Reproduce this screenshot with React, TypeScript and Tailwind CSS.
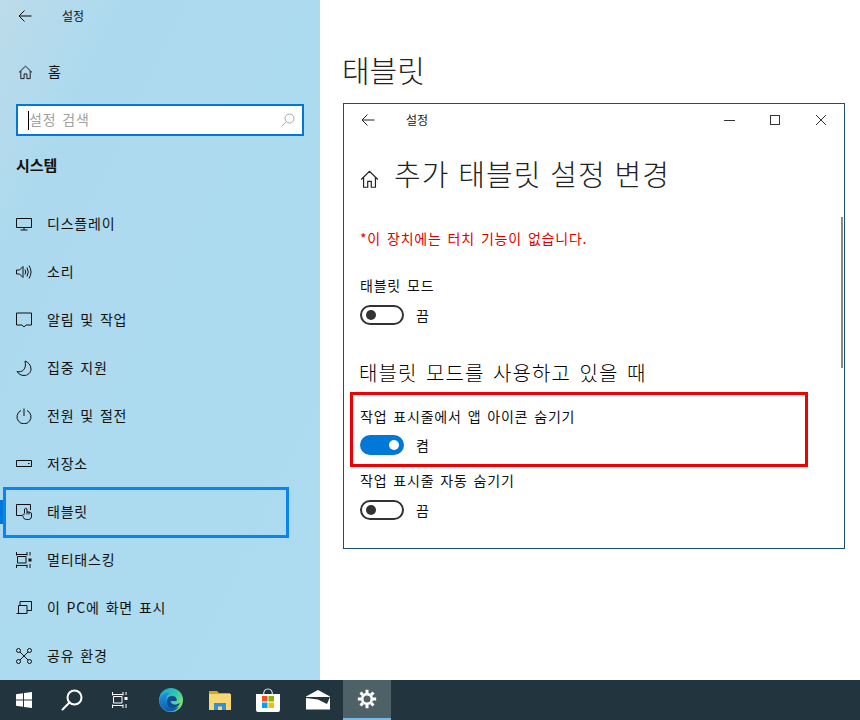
import React from "react";

const S = ({ children, w = 16, h = 16, box, className = "" }: any) => (
  <svg width={w} height={h} viewBox={box || `0 0 ${w} ${h}`} fill="none" stroke="currentColor" strokeWidth="1" className={"shrink-0 " + className}>
    {children}
  </svg>
);

const HomeIcon = ({ size = 16 }: { size?: number }) => (
  <S w={size} h={size} box="0 0 16 16">
    <path d="M1 8 L8 1.2 L15 8 M3 6.3 V14.5 H6.5 V9.5 H9.5 V14.5 H13 V6.3" />
  </S>
);

const Back = () => (
  <S w={14} h={14}>
    <path d="M1 7 H13.5 M6.5 1.5 L1 7 L6.5 12.5" />
  </S>
);

const nav: [string, React.ReactNode][] = [
  ["디스플레이", <S><path d="M.5 2.5 H15.5 V11.5 H.5 Z M8 11.5 V14 M4.5 14 H11.5" /></S>],
  ["소리", <S><path d="M.5 6 H3.5 L7 2.5 V13.5 L3.5 10 H.5 Z M9 5.5 Q10.5 8 9 10.5 M11 3.5 Q13.5 8 11 12.5 M13 1.5 Q17 8 13 14.5" /></S>],
  ["알림 및 작업", <S><path d="M.5 1 H15.5 V13 H10 L8 15 L6 13 H.5 Z" /></S>],
  ["집중 지원", <S><path d="M9 1 C12 2 15 5 15 9 C15 13 11.5 15.5 8 15.5 C5 15.5 2.5 14 1 11.5 C6 13 11 9 9 1 Z" /></S>],
  ["전원 및 절전", <S><path d="M8 .5 V8 M5 2.5 A7 7 0 1 0 11 2.5" /></S>],
  ["저장소", <S><path d="M.5 4.5 H15.5 V10.5 H.5 Z M12 7.5 H13.5" /></S>],
  ["태블릿", <S><path d="M6 11.5 H.5 V.5 H14.5 V6 M8.5 9.5 V5 Q9.7 3.5 11 5 V8 H13 Q15.5 8 15.5 10 V13 Q15 15.5 12.5 15.5 H10.5 Q8 15.5 7.5 13.5 L6.5 11.5 Q7 9.5 8.5 10.5 M11 8 V10.5 M13 8 V10.5" /></S>],
  ["멀티태스킹", <S><path d="M.5 0 V3.5 M11 0 V3.5 M.5 2.5 H11 M.5 12.5 V16 M11 12.5 V16 M.5 13.5 H11 M1.5 4.5 H10 V11 H1.5 Z M14 0 V3.5 M14 12 V16" /><rect x="12.5" y="6.5" width="3" height="3" fill="currentColor" stroke="none" /></S>],
  ["이 PC에 화면 표시", <S><path d="M4 5 V1.5 H15.5 V10.5 H11 M.5 13.5 H11 V5.5 H2.5 V13.5" /></S>],
  ["공유 환경", <S><circle cx="2.5" cy="2.5" r="2" /><circle cx="13.5" cy="2.5" r="2" /><circle cx="2.5" cy="13.5" r="2" /><circle cx="13.5" cy="13.5" r="2" /><path d="M4 4 L12 12 M12 4 L4 12" /></S>],
];

const Toggle = ({ on }: { on?: boolean }) => (
  <div className="flex items-center h-[20px]">
    {on ? (
      <div className="w-[44px] h-[20px] rounded-full bg-[#0078d7] flex items-center justify-end pr-[5px]">
        <div className="w-[10px] h-[10px] rounded-full bg-white" />
      </div>
    ) : (
      <div className="w-[44px] h-[20px] rounded-full border-2 border-[#333] flex items-center pl-[4px]">
        <div className="w-[10px] h-[10px] rounded-full bg-[#333]" />
      </div>
    )}
    <span className="ml-[12px] text-[14px] leading-[20px] text-[#111]">{on ? "켬" : "끔"}</span>
  </div>
);

const Setting = ({ label, on }: { label: string; on?: boolean }) => (
  <div className={on ? "flex flex-col gap-[9px]" : "flex flex-col gap-[10px]"}>
    <div className="text-[14px] leading-[20px] text-[#111] tracking-[0.8px] [word-spacing:2px]">{label}</div>
    <Toggle on={on} />
  </div>
);

const Edge = () => (
  <svg width="24" height="24" viewBox="0 0 24 24" className="shrink-0">
    <defs>
      <linearGradient id="eg" x1="0" y1="0" x2="1" y2="0.7">
        <stop offset="0" stopColor="#1a9fd8" />
        <stop offset="0.55" stopColor="#2fc4b2" />
        <stop offset="1" stopColor="#84e56a" />
      </linearGradient>
      <linearGradient id="eb" x1="0" y1="0" x2="0.3" y2="1">
        <stop offset="0" stopColor="#1f97e6" />
        <stop offset="1" stopColor="#0f5cae" />
      </linearGradient>
    </defs>
    <circle cx="12" cy="12" r="12" fill="url(#eg)" />
    <path d="M0.2 13 C1 6 7 4 11 5 C7 7 6.5 11 8.5 15 C10.5 19.5 16 20.5 20 19 C16 24.5 8 25 3.5 20 C1.5 18 0.2 16 0.2 13 Z" fill="url(#eb)" />
    <path d="M8 13 C8 9 11 7.5 14 8 C17 8.5 18.5 11 17.5 13 L11.5 13 C11.5 15.5 14 17 17 16.5 L21 15 C19.5 19.5 15 21 11.5 19.5 C9 18.5 8 16 8 13 Z" fill="#0f4c92" />
  </svg>
);

const Folder = () => (
  <svg width="22" height="20" viewBox="0 0 22 20" className="shrink-0">
    <path d="M0 1 H8 L10 3 H21 V6 H0 Z" fill="#d9a520" />
    <rect x="0" y="4" width="22" height="16" fill="#f8d775" />
    <path d="M5 20 V13 H17 V20 H13 V16.5 H9 V20 Z" fill="#2f8fdc" />
  </svg>
);

const Store = () => (
  <svg width="24" height="24" viewBox="0 0 24 24" className="shrink-0">
    <path d="M7.5 7 Q7.5 1 12 1 Q16.5 1 16.5 7" fill="none" stroke="#dfe5e8" strokeWidth="1.2" />
    <path d="M0 6 H24 V22 Q24 24 22 24 H2 Q0 24 0 22 Z" fill="#fff" />
    <rect x="6" y="8" width="5.5" height="5.5" fill="#f25022" />
    <rect x="12.5" y="8" width="5.5" height="5.5" fill="#7fba00" />
    <rect x="6" y="14.5" width="5.5" height="5.5" fill="#00a4ef" />
    <rect x="12.5" y="14.5" width="5.5" height="5.5" fill="#ffb900" />
  </svg>
);

const Mail = () => (
  <svg width="24" height="20" viewBox="0 0 24 20" className="shrink-0">
    <path d="M0 6.5 L12 0 L24 6.5 V19.5 H0 Z" fill="#fff" />
    <path d="M0 7 L24 7 L21 14 L12 9.5 L0 8 Z" fill="#22353f" />
  </svg>
);

const Gear = () => (
  <svg width="20" height="20" viewBox="0 0 24 24" className="shrink-0" fill="none" stroke="#fff" strokeWidth="3.2">
    <circle cx="12" cy="12" r="5.8" />
    <path strokeWidth="3.6" d="M12 1 V5 M12 19 V23 M1 12 H5 M19 12 H23 M4.2 4.2 L7 7 M17 17 L19.8 19.8 M4.2 19.8 L7 17 M17 7 L19.8 4.2" />
  </svg>
);

export default function App() {
  return (
    <div
      className="w-[860px] h-[720px] flex flex-col overflow-hidden bg-white text-black"
      style={{ fontFamily: '"Noto Sans CJK KR", "Noto Sans", sans-serif' }}
    >
      <div className="flex h-[680px]">
        {/* sidebar */}
        <aside className="w-[320px] shrink-0 flex flex-col bg-gradient-to-br from-[#bcdcea] via-[#acd9ee] to-[#acdcf0] via-20%">
          <div className="h-[32px] flex items-center pl-[18px]">
            <Back />
            <span className="ml-[30px] text-[12px] text-[#111]">설정</span>
          </div>
          <div className="h-[16px]" />
          <div className="h-[48px] flex items-center pl-[18px] gap-[15px] text-[#111]">
            <HomeIcon size={15} />
            <span className="text-[14px] pb-[2px]">홈</span>
          </div>
          <div className="h-[8px]" />
          <div className="mx-[16px] h-[32px] border-2 border-[#0078d7] bg-white flex items-center pl-[10px] pr-[7px]">
            <div className="w-[1px] h-[19px] bg-black" />
            <span className="text-[14px] text-[#a0a0a0] flex-1 tracking-[0.8px] [word-spacing:2px] pb-[2px]">설정 검색</span>
            <svg width="14" height="14" viewBox="0 0 14 14" fill="none" stroke="#a8a8a8" strokeWidth="1">
              <circle cx="8.5" cy="5.5" r="4.5" />
              <path d="M5.2 8.8 L.7 13.3" />
            </svg>
          </div>
          <div className="h-[39px] flex items-end pl-[16px]">
            <span className="text-[15px] font-bold leading-[20px] text-[#111]">시스템</span>
          </div>
          <div className="flex-1" />
          <div className="flex flex-col">
            {nav.map(([label, icon]) => {
              const active = label === "태블릿";
              return (
                <div key={label} className="relative h-[48px] flex items-center pl-[16px] gap-[15px] text-[#111]">
                  {active && <div className="absolute left-0 top-[12px] w-[5px] h-[24px] bg-[#0078d7]" />}
                  {active && <div className="absolute left-[3px] top-[-1px] w-[286px] h-[51px] border-[3px] border-[#0a84f0]" />}
                  {icon}
                  <span className="text-[14px] tracking-[0.8px] [word-spacing:2px] pb-[2px]">{label}</span>
                </div>
              );
            })}
          </div>
        </aside>

        {/* main */}
        <main className="flex-1 flex flex-col pl-[23px] pr-[15px]">
          <h1 className="h-[103px] pt-[47px] ml-[-1px] text-[30px] leading-[44px] font-light text-[#222]">태블릿</h1>
          <div className="relative w-[502px] h-[446px] border border-[#1b5172] pl-[16px] pr-[8px] flex flex-col">
            <div className="h-[32px] flex items-center pl-[1px] mr-[-8px] shrink-0 text-[#222]">
              <Back />
              <span className="ml-[31px] text-[12px]">설정</span>
              <div className="flex-1" />
              <div className="w-[46px] flex justify-center">
                <div className="w-[11px] h-[1px] bg-[#333]" />
              </div>
              <div className="w-[46px] flex justify-center">
                <div className="w-[10px] h-[10px] border border-[#333]" />
              </div>
              <div className="w-[46px] flex justify-center">
                <svg width="12" height="12" viewBox="0 0 12 12" stroke="#333" fill="none"><path d="M1 1 L11 11 M11 1 L1 11" /></svg>
              </div>
            </div>
            <div className="h-[54px] flex items-center mt-[16px] shrink-0 text-[#222]">
              <HomeIcon size={19} />
              <span className="ml-[15px] text-[29px] leading-[44px] font-light tracking-[1px] [word-spacing:1.5px] pb-[12px]">추가 태블릿 설정 변경</span>
            </div>
            <div className="absolute right-[1px] top-[113px] w-[2px] h-[151px] bg-[#8a8a8a]" />
            <div className="mt-[22px] text-[14px] leading-[20px] text-[#e00000] tracking-[0.8px] [word-spacing:2px]">*이 장치에는 터치 기능이 없습니다.</div>
            <div className="mt-[27px]">
              <Setting label="태블릿 모드" />
            </div>
            <div className="mt-[33px] ml-[-1px] text-[20px] leading-[30px] text-black font-light tracking-[1.1px] [word-spacing:3px]">태블릿 모드를 사용하고 있을 때</div>
            <div className="relative mt-[18px]">
              <Setting label="작업 표시줄에서 앱 아이콘 숨기기" on />
              <div className="absolute left-[-10px] top-[-14px] w-[458px] h-[75px] border-[3px] border-[#f00000]" />
            </div>
            <div className="mt-[15px]">
              <Setting label="작업 표시줄 자동 숨기기" />
            </div>
          </div>
        </main>
      </div>

      {/* taskbar */}
      <footer className="h-[40px] bg-[#22353f] flex shrink-0 text-white">
        <div className="w-[48px] flex items-center justify-center">
          <svg width="16" height="16" viewBox="0 0 16 16" fill="#fff">
            <path d="M0 2.2 L7 1.2 V7.6 H0 Z M8 1 L16 0 V7.6 H8 Z M0 8.5 H7 V14.8 L0 13.8 Z M8 8.5 H16 V16 L8 15 Z" />
          </svg>
        </div>
        <div className="w-[48px] flex items-center justify-center">
          <svg width="22" height="22" viewBox="0 0 22 22" fill="none" stroke="#fff" strokeWidth="2">
            <circle cx="13.5" cy="8.5" r="7" />
            <path d="M8.5 13.5 L1.5 20.5" strokeLinecap="round" />
          </svg>
        </div>
        <div className="w-[48px] flex items-center justify-center">
          <svg width="16" height="16" viewBox="0 0 16 16" fill="none" stroke="#fff" strokeWidth="1">
            <path d="M.5 0 V3.5 M11 0 V3.5 M.5 2.5 H11 M.5 12.5 V16 M11 12.5 V16 M.5 13.5 H11 M1.5 4.5 H10 V11 H1.5 Z M14 0 V3 M14 12 V16" />
            <rect x="12.5" y="5" width="3" height="3" fill="#fff" stroke="none" />
          </svg>
        </div>
        <div className="w-[48px] ml-[3px] flex items-center justify-center"><Edge /></div>
        <div className="w-[48px] ml-[1px] flex items-center justify-center"><Folder /></div>
        <div className="w-[48px] flex items-center justify-center"><Store /></div>
        <div className="w-[48px] ml-[2px] flex items-center justify-center"><Mail /></div>
        <div className="w-[48px] ml-[1px] flex items-center justify-center bg-[#4e6166] border-b-2 border-[#76b9ed]"><Gear /></div>
      </footer>
    </div>
  );
}
